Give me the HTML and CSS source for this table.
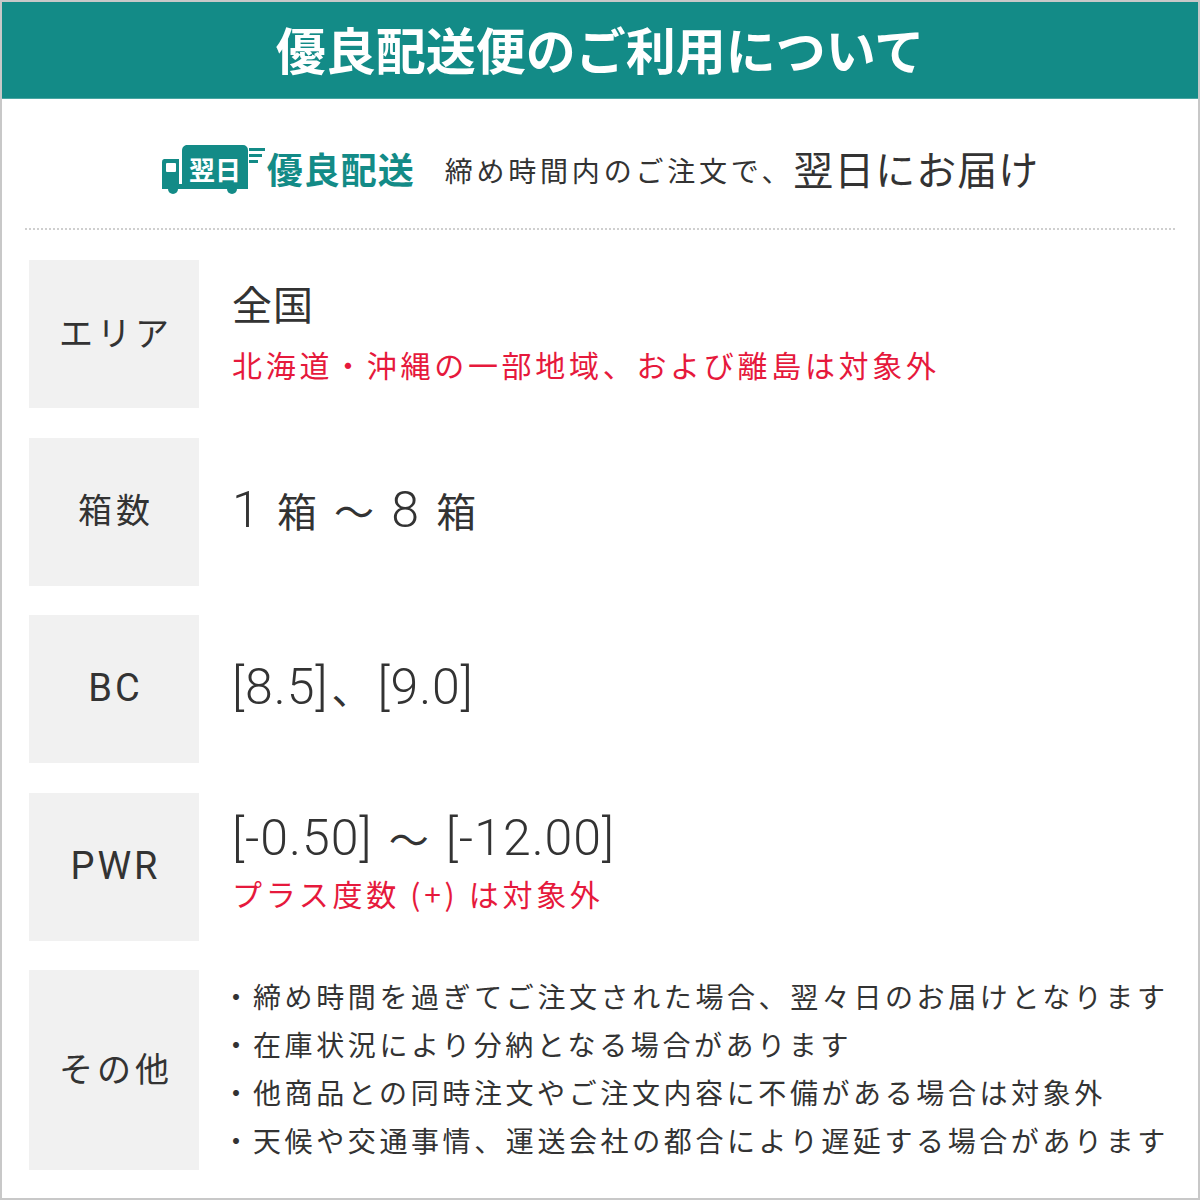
FILE: index.html
```html
<!DOCTYPE html>
<html lang="ja">
<head>
<meta charset="utf-8">
<link rel="stylesheet" href="styles.css">
</head>
<body>
<div class="page">
  <header class="header">優良配送便のご利用について</header>
  <section class="intro">
    <div class="logo">
      <svg class="truck" width="106" height="52" viewBox="163 146 106 52">
        <path d="M166 161 h15 v30 h-17 v-27 a3 3 0 0 1 2 -3 z" fill="#138b87"/>
        <rect x="168" y="165" width="10" height="9" rx="1" fill="#fff"/>
        <path d="M188 147 h57 a5 5 0 0 1 5 5 v34 a5 5 0 0 1 -5 5 h-61 v-38 a6 6 0 0 1 4 -6 z" fill="#138b87"/>
        <rect x="164" y="186" width="86" height="5" fill="#138b87"/>
        <circle cx="175" cy="191" r="5" fill="#138b87"/>
        <circle cx="234" cy="191" r="5" fill="#138b87"/>
        <rect x="251" y="150" width="16" height="3" fill="#138b87"/>
        <rect x="251" y="156" width="13" height="3" fill="#138b87"/>
        <rect x="251" y="162" width="9" height="3" fill="#138b87"/>
        <text x="217" y="182" text-anchor="middle" class="truck-text">翌日</text>
      </svg>
      <span class="logo-text">優良配送</span>
    </div>
    <span class="intro-small">締め時間内のご注文で、</span><span class="intro-big">翌日にお届け</span>
  </section>
  <div class="rows">
    <div class="row">
      <div class="label">エリア</div>
      <div class="value value-up">
        <div class="main"><span class="ja">全国</span></div>
        <div class="note">北海道・沖縄の一部地域、および離島は対象外</div>
      </div>
    </div>
    <div class="row">
      <div class="label">箱数</div>
      <div class="value">
        <div class="main">1 <span class="ja">箱</span> <span class="ja">～</span> 8 <span class="ja">箱</span></div>
      </div>
    </div>
    <div class="row">
      <div class="label latin">BC</div>
      <div class="value">
        <div class="main">[8.5]<span class="ja sep">、</span>[9.0]</div>
      </div>
    </div>
    <div class="row">
      <div class="label latin">PWR</div>
      <div class="value value-up">
        <div class="main">[-0.50] <span class="ja">～</span> [-12.00]</div>
        <div class="note note-tight">プラス度数 (+) は対象外</div>
      </div>
    </div>
    <div class="row row-tall">
      <div class="label">その他</div>
      <div class="value">
        <ul class="list">
          <li><span class="dot">・</span>締め時間を過ぎてご注文された場合、翌々日のお届けとなります</li>
          <li><span class="dot">・</span>在庫状況により分納となる場合があります</li>
          <li><span class="dot">・</span>他商品との同時注文やご注文内容に不備がある場合は対象外</li>
          <li><span class="dot">・</span>天候や交通事情、運送会社の都合により遅延する場合があります</li>
        </ul>
      </div>
    </div>
  </div>
</div>
</body>
</html>
```
FILE: styles.css
```css
* { box-sizing: border-box; }
html, body { margin: 0; padding: 0; background: #fff; }
body {
  font-family: "Noto Sans CJK JP", "Noto Sans", sans-serif;
  color: #333;
}
.page {
  width: 1200px;
  height: 1200px;
  border: 2px solid #c8c8c8;
  display: flex;
  flex-direction: column;
}
.header {
  height: 97px;
  background: #138b87;
  border-bottom: 1px solid #4aa5a2;
  color: #fff;
  font-weight: 700;
  font-size: 50px;
  line-height: 1;
  display: flex;
  align-items: center;
  justify-content: center;
  padding-bottom: 4px;
}
.intro {
  height: 131px;
  margin: 0 23px;
  border-bottom: 2px dotted #cfcfcf;
  display: flex;
  align-items: center;
  justify-content: center;
  padding-top: 8px;
}
.logo {
  display: flex;
  align-items: center;
  margin-right: 30px;
}
.truck { display: block; margin-top: 4px; }
.truck-text {
  font-family: "Noto Sans CJK JP", sans-serif;
  font-weight: 700;
  font-size: 26px;
  fill: #fff;
}
.logo-text {
  color: #138b87;
  font-weight: 700;
  font-size: 36px;
  line-height: 1;
  letter-spacing: 1px;
}
.intro-small {
  font-size: 28px;
  letter-spacing: 3.8px;
  line-height: 1;
  margin-top: 4px;
}
.intro-big {
  font-size: 40px;
  letter-spacing: 1px;
  line-height: 1;
}
.rows {
  display: flex;
  flex-direction: column;
  gap: 29.5px;
  padding: 30px 0 0 27px;
}
.row {
  display: flex;
  height: 148px;
  gap: 33px;
}
.row-tall { height: 200px; }
.label {
  width: 170px;
  background: #f1f1f1;
  display: flex;
  align-items: center;
  justify-content: center;
  font-size: 34px;
  letter-spacing: 4px;
  padding-left: 4px;
  padding-bottom: 6px;
  color: #333;
}
.label.latin {
  font-family: "Roboto", "Noto Sans CJK JP", sans-serif;
  font-size: 38px;
  letter-spacing: 3px;
  padding-left: 3px;
  padding-bottom: 2px;
}
.value {
  display: flex;
  flex-direction: column;
  justify-content: center;
  padding-bottom: 4px;
}
.value-up { padding-bottom: 12px; }
.main {
  font-family: "Roboto", "Noto Sans CJK JP", sans-serif;
  font-weight: 300;
  font-size: 50px;
  line-height: 50px;
  letter-spacing: 1px;
  word-spacing: 3px;
  color: #333;
  white-space: pre;
}
.main .ja {
  font-family: "Noto Sans CJK JP", sans-serif;
  font-weight: 400;
  font-size: 40px;
  letter-spacing: 1px;
}
.main .sep { margin: 0 5px 0 3px; }
.note {
  font-size: 30px;
  line-height: 1;
  margin-top: 21px;
  letter-spacing: 3.7px;
  color: #e6193c;
}
.note-tight { margin-top: 15px; }
.list {
  list-style: none;
  margin: 0;
  padding: 0;
}
.list li {
  font-size: 28px;
  line-height: 48px;
  letter-spacing: 3.6px;
  color: #333;
}
.dot {
  display: inline-block;
  width: 31px;
  margin-left: -10px;
}
```
